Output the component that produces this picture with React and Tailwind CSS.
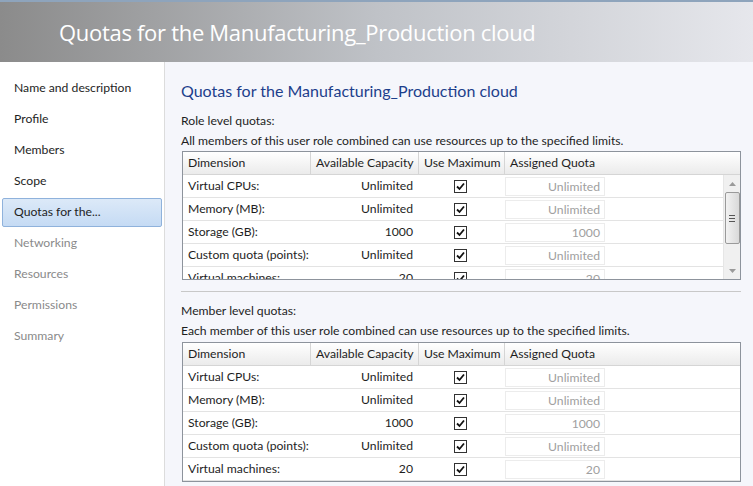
import React from "react";

const navItems = [
  { label: "Name and description", state: "done" },
  { label: "Profile", state: "done" },
  { label: "Members", state: "done" },
  { label: "Scope", state: "done" },
  { label: "Quotas for the...", state: "active" },
  { label: "Networking", state: "todo" },
  { label: "Resources", state: "todo" },
  { label: "Permissions", state: "todo" },
  { label: "Summary", state: "todo" },
];

const rows = [
  { dim: "Virtual CPUs:", cap: "Unlimited", quota: "Unlimited" },
  { dim: "Memory (MB):", cap: "Unlimited", quota: "Unlimited" },
  { dim: "Storage (GB):", cap: "1000", quota: "1000" },
  { dim: "Custom quota (points):", cap: "Unlimited", quota: "Unlimited" },
  { dim: "Virtual machines:", cap: "20", quota: "20" },
];

const Check = () => (
  <div className="w-[13px] h-[13px] border border-[#333] bg-white flex items-center justify-center">
    <svg width="9" height="9" viewBox="0 0 9 9">
      <path d="M1 4.5 L3.5 7 L8 1.5" fill="none" stroke="#111" strokeWidth="1.8" />
    </svg>
  </div>
);

const Row = ({ r }) => (
  <div className="flex h-[23px] items-center border-b border-[#e3e3e3] shrink-0 whitespace-nowrap">
    <div className="w-[128px] pl-[5px]">{r.dim}</div>
    <div className="w-[108px] text-right pr-[6px]">{r.cap}</div>
    <div className="w-[86px] flex justify-center pr-[4px]">
      <Check />
    </div>
    <div className="w-[100px] h-[19px] border border-[#ececec] bg-white text-right pr-[4px] text-[#a0a0a0] leading-[17px]">
      {r.quota}
    </div>
  </div>
);

const Header = () => (
  <div className="flex h-[23px] items-center border-b border-[#d5d5d5] bg-gradient-to-b from-white to-[#ebebeb] shrink-0 whitespace-nowrap">
    <div className="w-[128px] pl-[5px] h-full flex items-center border-r border-[#d5d5d5]">Dimension</div>
    <div className="w-[108px] pl-[5px] h-full flex items-center border-r border-[#d5d5d5]">Available Capacity</div>
    <div className="w-[86px] pl-[5px] h-full flex items-center border-r border-[#d5d5d5]">Use Maximum</div>
    <div className="pl-[5px] h-full flex items-center">Assigned Quota</div>
  </div>
);

const Scrollbar = () => (
  <div className="w-[17px] bg-[#f0f0f0] border-l border-[#e6e6e6] flex flex-col items-center">
    <div className="h-[17px] flex items-center justify-center">
      <svg width="7" height="4" viewBox="0 0 7 4"><path d="M0 4 L3.5 0 L7 4 Z" fill="#9a9a9a" /></svg>
    </div>
    <div className="w-[15px] h-[52px] border border-[#9a9a9a] rounded-[2px] bg-gradient-to-r from-[#f2f2f2] to-[#d9d9d9] flex flex-col items-center justify-center gap-[2px]">
      <div className="w-[6px] h-px bg-[#555]" />
      <div className="w-[6px] h-px bg-[#555]" />
      <div className="w-[6px] h-px bg-[#555]" />
    </div>
    <div className="flex-1" />
    <div className="h-[17px] flex items-center justify-center">
      <svg width="7" height="4" viewBox="0 0 7 4"><path d="M0 0 L3.5 4 L7 0 Z" fill="#9a9a9a" /></svg>
    </div>
  </div>
);

export default function App() {
  return (
    <div
      className="w-[753px] h-[486px] overflow-hidden flex flex-col text-[12.2px] text-[#1e1e1e]"
      style={{ fontFamily: 'Lato, "Open Sans", sans-serif' }}
    >
      <div className="h-[62px] shrink-0 border-t-2 border-[#8ea4bc] bg-gradient-to-r from-[#8b8b8b] via-[#bfc2c7] to-[#e6e7ec] flex items-center pl-[59px]">
        <div className="text-white text-[22px] tracking-[-0.3px]" style={{ fontFamily: '"Open Sans", sans-serif' }}>
          Quotas for the Manufacturing_Production cloud
        </div>
      </div>
      <div className="flex flex-1 min-h-0">
        <div className="w-[165px] shrink-0 bg-white border-r border-[#dcdcdc] pt-[12px] px-[2px] flex flex-col">
          {navItems.map((n) => (
            <div
              key={n.label}
              className={`h-[29px] mb-[2px] flex items-center pl-[11px] rounded-[2px] border ${
                n.state === "active"
                  ? "border-[#8fb2dc] bg-gradient-to-b from-[#dce9f8] to-[#c5dbf4]"
                  : "border-transparent"
              } ${n.state === "todo" ? "text-[#8a8a8a]" : "text-[#1e1e1e]"}`}
            >
              {n.label}
            </div>
          ))}
        </div>
        <div className="flex-1 bg-[#f5f6fb] pl-[16px] pr-[12px] pt-[19px] flex flex-col">
          <div className="text-[16px] leading-[20px] text-[#1d3f8c]">Quotas for the Manufacturing_Production cloud</div>
          <div className="mt-[10px] leading-[20px]">Role level quotas:</div>
          <div className="leading-[19px]">All members of this user role combined can use resources up to the specified limits.</div>
          <div className="mt-[1px] ml-px h-[129px] border border-[#8d939c] bg-white flex flex-col">
            <Header />
            <div className="flex flex-1 min-h-0">
              <div className="flex-1 overflow-hidden flex flex-col">
                {rows.map((r) => (
                  <Row key={r.dim} r={r} />
                ))}
              </div>
              <Scrollbar />
            </div>
          </div>
          <div className="mt-[11px] h-px bg-[#c8c8c8]" />
          <div className="mt-[9px] leading-[20px]">Member level quotas:</div>
          <div className="leading-[19px]">Each member of this user role combined can use resources up to the specified limits.</div>
          <div className="mt-[2px] ml-px h-[140px] border border-[#8d939c] bg-white flex flex-col">
            <Header />
            {rows.map((r) => (
              <Row key={r.dim} r={r} />
            ))}
          </div>
        </div>
      </div>
    </div>
  );
}
